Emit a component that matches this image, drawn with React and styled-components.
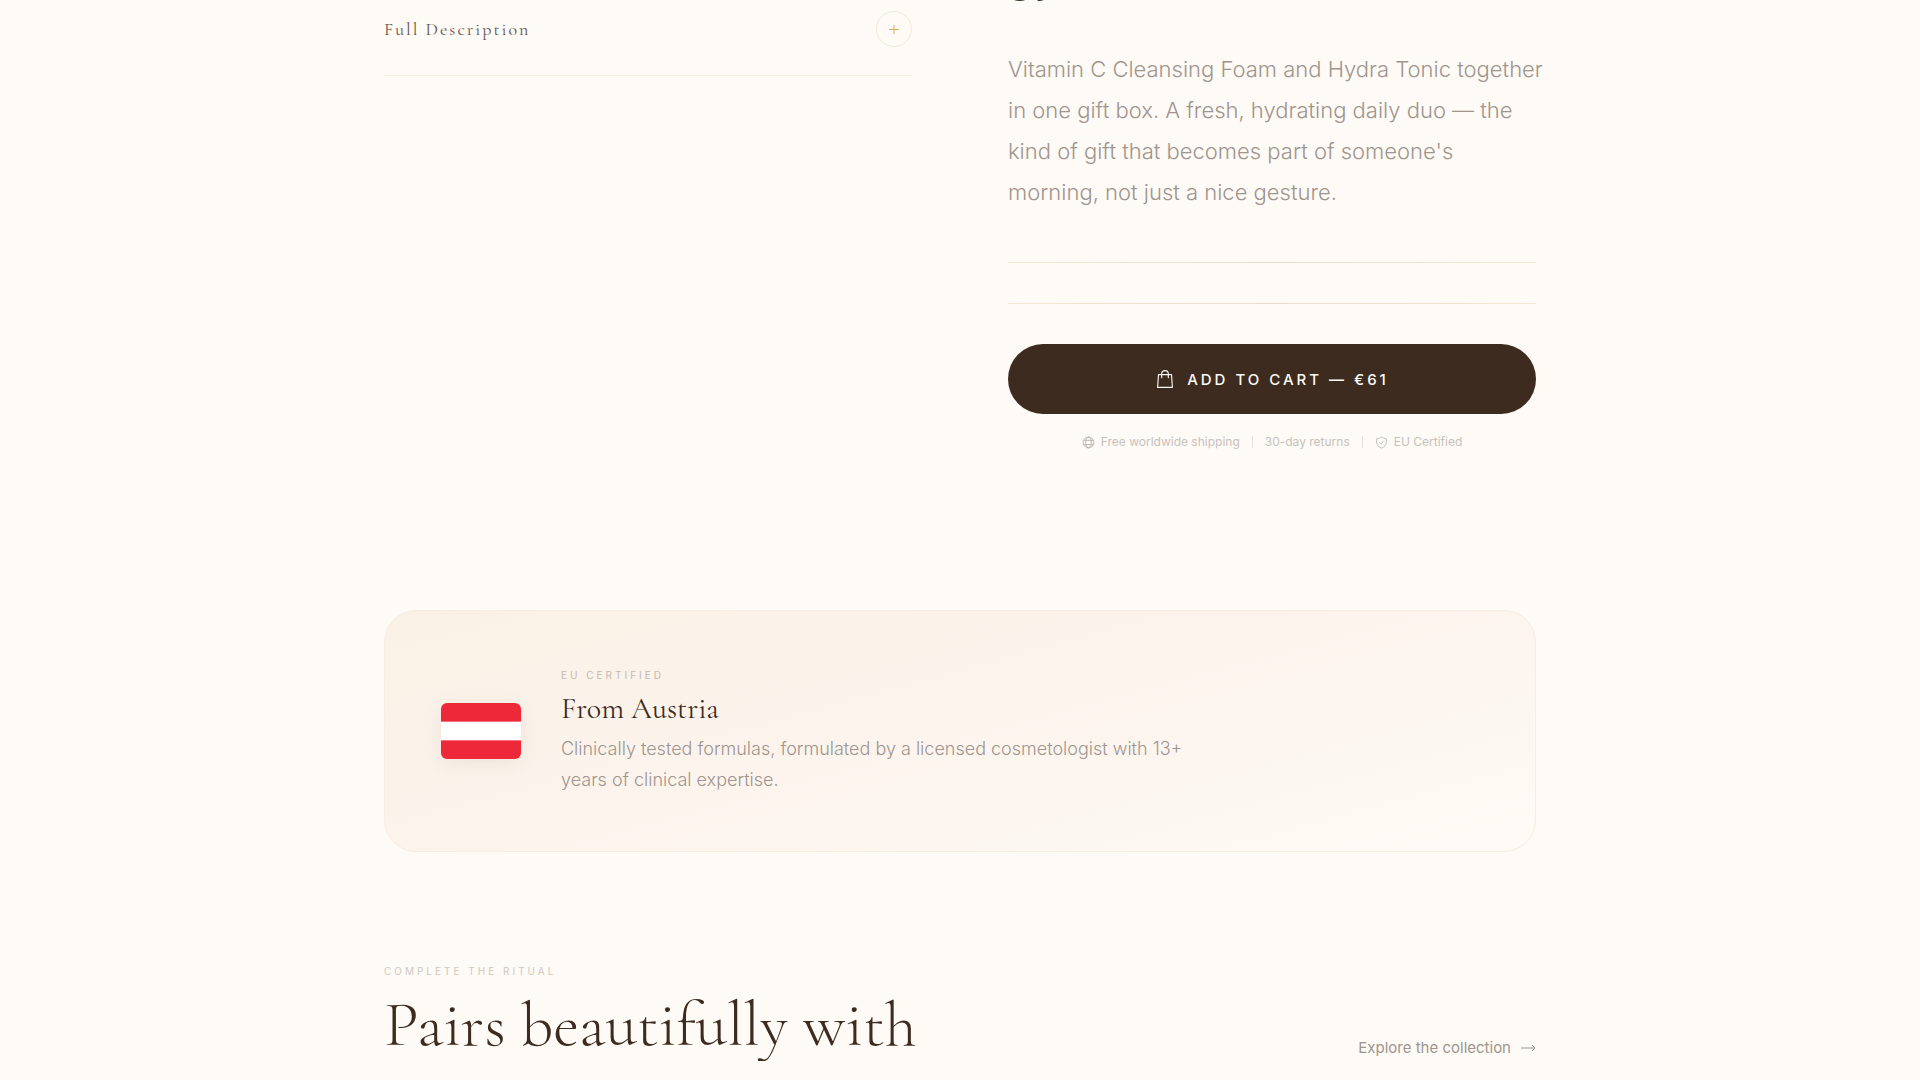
import styled, { createGlobalStyle } from "styled-components";

const GlobalStyle = createGlobalStyle`
  * {
    box-sizing: border-box;
  }
  html {
    overflow: hidden;
  }
  body {
    margin: 0;
    background: #fefaf5;
    color: #3d2b1f;
    font-family: "Inter", sans-serif;
  }
  h1, h2, h3, p {
    margin: 0;
    font-weight: 400;
  }
`;

const Page = styled.main`
  max-width: 1152px;
  margin: 0 auto;
`;

const ProductGrid = styled.section`
  display: grid;
  grid-template-columns: 1fr 1fr;
  align-items: start;
  gap: 96px;
`;

const AccordionHeader = styled.button`
  display: flex;
  align-items: center;
  justify-content: space-between;
  width: 100%;
  padding: 11px 0 28px;
  border: none;
  border-bottom: 1px solid #faece1;
  background: none;
  color: #64544b;
  font-family: "Cormorant Garamond", "Liberation Serif", serif;
  font-size: 18px;
  letter-spacing: 2px;
  cursor: pointer;
`;

const PlusCircle = styled.span`
  display: flex;
  align-items: center;
  justify-content: center;
  width: 36px;
  height: 36px;
  border: 1px solid #f3e8d8;
  border-radius: 50%;
  color: #d1ae6d;
`;

/* only the descenders of the last title line stay in view */
const ProductTitle = styled.h1`
  display: flex;
  align-items: flex-end;
  height: 2px;
  font-family: "Cormorant Garamond", "Liberation Serif", serif;
  font-size: 64px;
  font-weight: 300;
  line-height: 77px;
`;

const Description = styled.p`
  margin-right: -8px;
  padding: 47px 0 49px;
  color: #9e958f;
  font-size: 22px;
  font-weight: 300;
  line-height: 41px;
`;

const Divider = styled.div`
  height: 1px;
  margin-bottom: 40px;
  background: linear-gradient(90deg, #f5e6d0, #e8ddd0, #f5e6d0);
`;

const CartButton = styled.button`
  display: flex;
  align-items: center;
  justify-content: center;
  gap: 14px;
  width: 100%;
  height: 70px;
  border: none;
  border-radius: 35px;
  background: #3d2b1f;
  color: #fefaf5;
  font-family: inherit;
  font-size: 15px;
  font-weight: 500;
  letter-spacing: 3px;
  text-transform: uppercase;
  cursor: pointer;
`;

const TrustRow = styled.div`
  display: flex;
  align-items: center;
  justify-content: center;
  gap: 12px;
  margin-top: 20px;
  color: #c8c1bc;
  font-size: 12px;
  line-height: 16px;
`;

const TrustItem = styled.span`
  display: flex;
  align-items: center;
  gap: 6px;
`;

const TrustSeparator = styled.span`
  width: 1px;
  height: 12px;
  background: #e8e2dc;
`;

const OriginCard = styled.section`
  display: flex;
  align-items: center;
  gap: 40px;
  margin-top: 160px;
  padding: 56px;
  border: 1px solid #f8ede0;
  border-radius: 32px;
  background: linear-gradient(165deg, #faf1e6 0%, #fcf4ed 50%, #fefaf5 100%);
`;

const Flag = styled.svg`
  flex: none;
  width: 80px;
  height: 56px;
  border-radius: 6px;
  box-shadow: 0 4px 20px rgba(61, 43, 31, 0.08);
`;

const OriginText = styled.div`
  max-width: 640px;
`;

const Eyebrow = styled.p`
  color: ${(props) => (props.$faint ? "#cfc8c2" : "#c4b8af")};
  font-size: 10px;
  line-height: 16px;
  letter-spacing: 3px;
  text-transform: uppercase;
`;

const OriginTitle = styled.h3`
  margin: 8px 0 6px;
  font-family: "Cormorant Garamond", "Liberation Serif", serif;
  font-size: 30px;
  line-height: 36px;
`;

const OriginBody = styled.p`
  color: #9e958f;
  font-size: 18px;
  font-weight: 300;
  line-height: 31px;
`;

const PairsHeader = styled.section`
  display: flex;
  align-items: flex-end;
  justify-content: space-between;
  margin-top: 111px;
`;

const PairsTitle = styled.h2`
  margin-top: 10px;
  font-family: "Cormorant Garamond", "Liberation Serif", serif;
  font-size: 64px;
  font-weight: 300;
  line-height: 72px;
`;

const ExploreLink = styled.a`
  display: flex;
  align-items: center;
  gap: 10px;
  color: #9e958f;
  font-size: 15px;
  line-height: 26px;
  text-decoration: none;
`;

function BagIcon() {
  return (
    <svg width="18" height="18" viewBox="-2 0 18 18" fill="none" stroke="currentColor" strokeWidth="1.100">
      <path d="M1.500 4.600h13l.900 12.800H.600z" strokeLinejoin="round" />
      <path d="M4.700 7.800V3.800a3.300 3.200 0 0 1 6.600 0v4" strokeLinecap="round" />
    </svg>
  );
}

function GlobeIcon() {
  return (
    <svg width="13" height="13" viewBox="0 0 13 13" fill="none" stroke="#a99f98" strokeWidth="0.7">
      <circle cx="6.5" cy="6.5" r="5.4" />
      <ellipse cx="6.5" cy="6.5" rx="2.8" ry="5.4" />
      <path d="M1.600 4.400h9.800M1.600 8.600h9.800" />
    </svg>
  );
}

function ShieldIcon() {
  return (
    <svg width="13" height="13" viewBox="0 0 14 14" fill="none" stroke="#b8b0aa" strokeWidth="0.8">
      <path d="M7 1c1.500 1.200 3.200 1.800 5.300 1.900v3.500c0 3.200-2.100 5.300-5.300 6.600-3.200-1.300-5.300-3.400-5.300-6.600V2.900C3.800 2.800 5.500 2.200 7 1z" strokeLinejoin="round" />
      <path d="m5 7.300 1.500 1.500 2.700-3.300" strokeLinecap="round" />
    </svg>
  );
}

export default function App() {
  return (
    <>
      <GlobalStyle />
      <Page>
        <ProductGrid>
          <AccordionHeader type="button">
            Full Description
            <PlusCircle>
              <svg width="10" height="10" viewBox="0 0 10 10" stroke="currentColor" strokeWidth="1">
                <path d="M5 1v9M0 5.500h10" />
              </svg>
            </PlusCircle>
          </AccordionHeader>
          <div>
            <ProductTitle>gy</ProductTitle>
            <Description>
              Vitamin C Cleansing Foam and Hydra Tonic together in one gift box. A fresh, hydrating
              daily duo — the kind of gift that becomes part of someone's morning, not just a nice
              gesture.
            </Description>
            <Divider />
            <Divider />
            <CartButton type="button">
              <BagIcon />
              Add to cart — €61
            </CartButton>
            <TrustRow>
              <TrustItem>
                <GlobeIcon />
                Free worldwide shipping
              </TrustItem>
              <TrustSeparator />
              <TrustItem>30-day returns</TrustItem>
              <TrustSeparator />
              <TrustItem>
                <ShieldIcon />
                EU Certified
              </TrustItem>
            </TrustRow>
          </div>
        </ProductGrid>
        <OriginCard>
          <Flag viewBox="0 0 80 56" role="img" aria-label="Austria">
            <rect width="80" height="56" fill="#ed2939" />
            <rect y="18.670" width="80" height="18.670" fill="#fff" />
          </Flag>
          <OriginText>
            <Eyebrow>EU Certified</Eyebrow>
            <OriginTitle>From Austria</OriginTitle>
            <OriginBody>
              Clinically tested formulas, formulated by a licensed cosmetologist with 13+ years of
              clinical expertise.
            </OriginBody>
          </OriginText>
        </OriginCard>
        <PairsHeader>
          <div>
            <Eyebrow $faint>Complete the ritual</Eyebrow>
            <PairsTitle>Pairs beautifully with</PairsTitle>
          </div>
          <ExploreLink href="#collection">
            Explore the collection
            <svg width="15" height="8" viewBox="0 0 15 8" fill="none" stroke="currentColor" strokeWidth="1">
              <path d="M0 4h14M11 1l3 3-3 3" />
            </svg>
          </ExploreLink>
        </PairsHeader>
      </Page>
    </>
  );
}
